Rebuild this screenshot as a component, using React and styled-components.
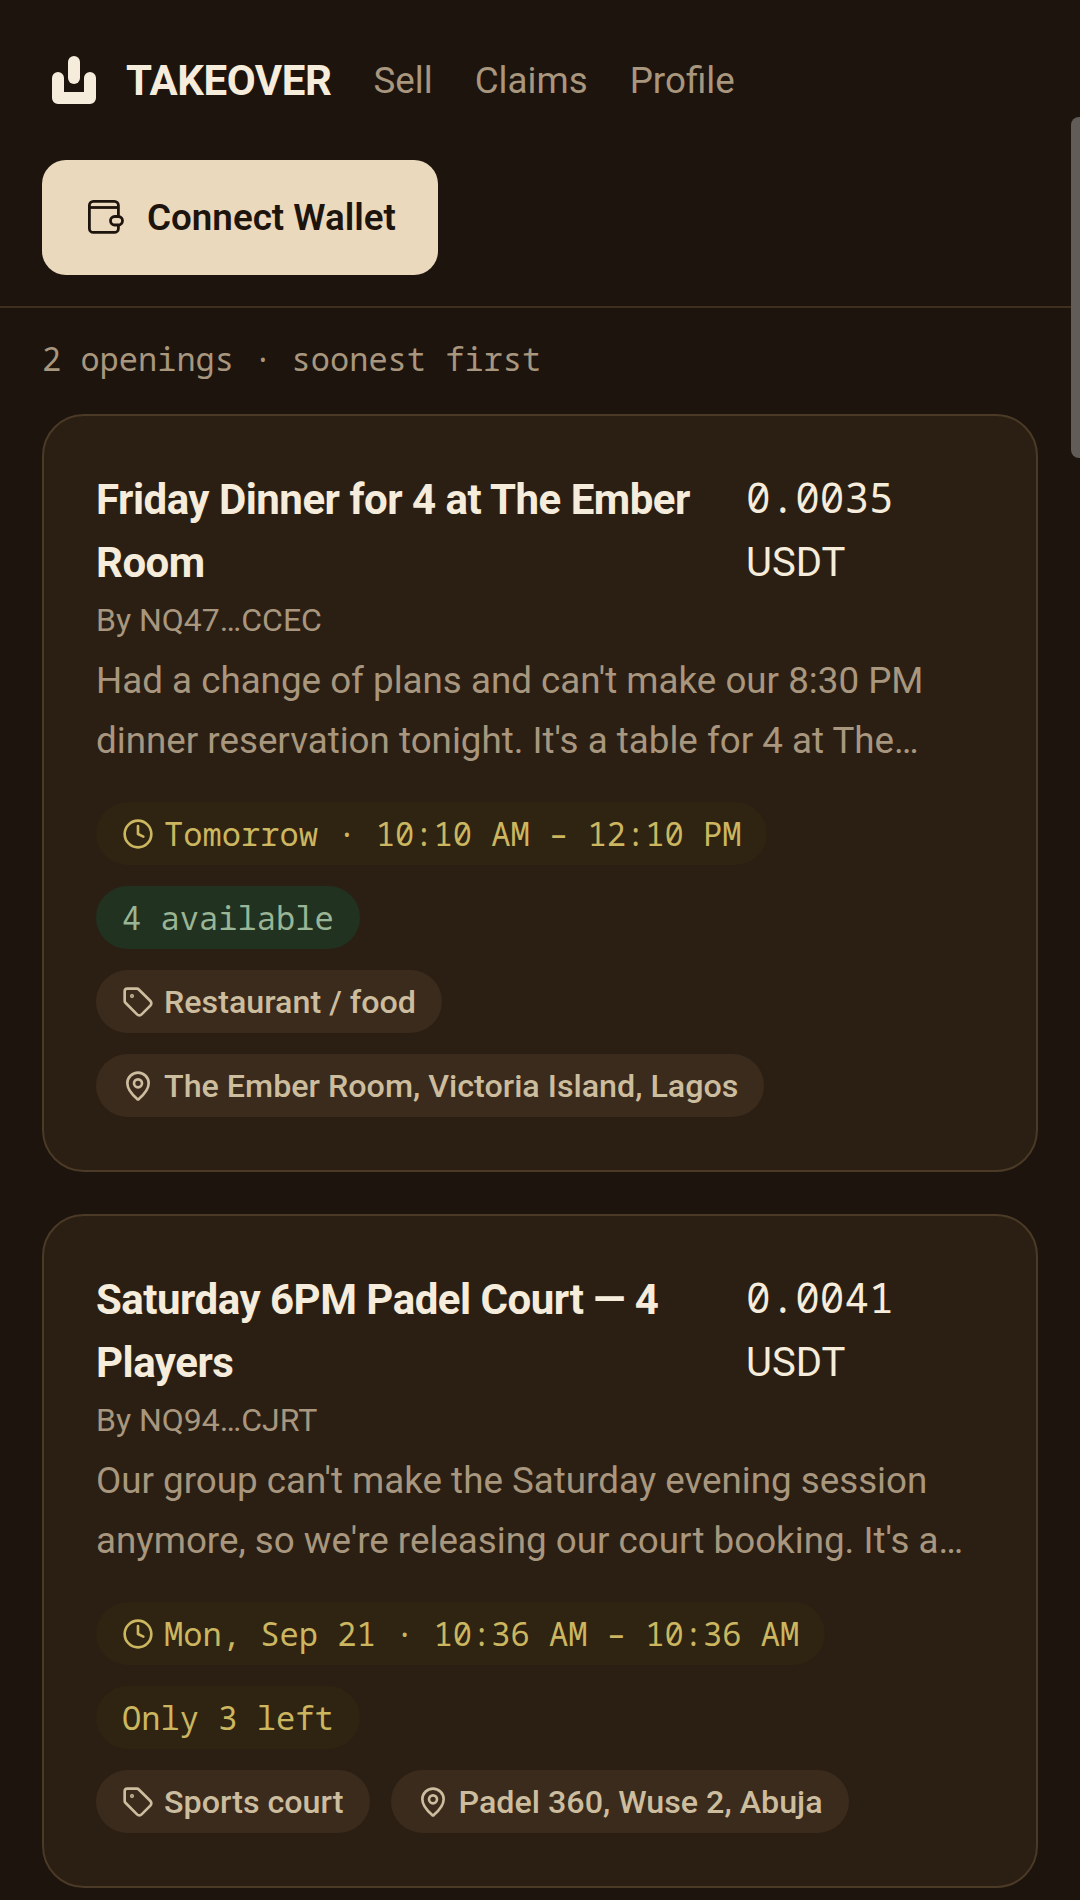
import React from "react";
import styled, { createGlobalStyle } from "styled-components";
import { Clock, Tag, MapPin } from "lucide-react";

const Global = createGlobalStyle`
  html, body { margin: 0; padding: 0; background: #1d140d; }
  * { box-sizing: border-box; }
`;
const MONO = '"Noto Sans Mono", "DejaVu Sans Mono", monospace';
const Page = styled.div`
  position: relative;
  width: 1080px;
  height: 1900px;
  overflow: hidden;
  background: #1d140d;
  font-family: Roboto, "Liberation Sans", sans-serif;
`;
const Header = styled.header`
  display: flex;
  flex-direction: column;
  align-items: flex-start;
  gap: 40px;
  padding: 40px 42px 31px;
  border-bottom: 2px solid #3d2f1e;
`;
const TopRow = styled.div`
  display: flex;
  align-items: center;
  height: 80px;
`;
const Brand = styled.div`
  display: flex;
  align-items: center;
  gap: 30px;
  padding-left: 10px;
  font-size: 42px;
  font-weight: 700;
  color: #f5ecdc;
  letter-spacing: -0.42px;
`;
const Nav = styled.nav`
  display: flex;
  gap: 42px;
  margin-left: 42px;
  font-size: 36.75px;
  color: #a8977e;
`;
const ConnectButton = styled.button`
  display: flex;
  align-items: center;
  gap: 23px;
  width: 396px;
  height: 115px;
  padding: 0 0 0 46px;
  border: 0;
  border-radius: 24px;
  background: #ead9bd;
  color: #1d140d;
  font-family: Roboto, sans-serif;
  font-size: 36.75px;
  font-weight: 600;
`;
const Main = styled.main`
  padding: 0 42px;
`;
const Summary = styled.div`
  height: 106px;
  padding-top: 31px;
  font-family: ${MONO};
  font-size: 32px;
  line-height: 40px;
  color: #a8977e;
`;
const Card = styled.article`
  padding: 52px 52px 53px;
  margin-bottom: 42px;
  border: 2px solid #4a3a26;
  border-radius: 42px;
  background: #2b1f14;
`;
const CardHead = styled.div`
  display: flex;
  justify-content: space-between;
`;
const Title = styled.h2`
  width: 630px;
  margin: 0;
  font-size: 42px;
  line-height: 63px;
  font-weight: 700;
  letter-spacing: -0.5px;
  color: #f5ecdc;
`;
const Price = styled.div`
  width: 238px;
  font-size: 40px;
  line-height: 63px;
  color: #f5ecdc;
`;
const PriceAmount = styled.span`
  display: block;
  height: 63px;
  font-family: ${MONO};
  font-size: 41px;
  line-height: 58px;
`;
const PriceUnit = styled.span`
  display: block;
`;
const Seller = styled.div`
  font-size: 32px;
  line-height: 53px;
  color: #a8977e;
`;
const Desc = styled.p`
  margin: 4px 0 0;
  font-size: 36.75px;
  line-height: 60px;
  color: #a8977e;
`;
const DescLine = styled.span`
  display: block;
  white-space: nowrap;
`;
const Pills = styled.div`
  display: flex;
  flex-direction: column;
  align-items: flex-start;
  gap: 21px;
  margin-top: 31px;
`;
const TagRow = styled.div`
  display: flex;
  flex-wrap: wrap;
  gap: 21px;
`;
const toneBg = { time: "#2e2411", green: "#213220", warn: "#2e2411", tag: "#3b2b1c" };
const toneFg = { time: "#ccb660", green: "#9ab596", warn: "#ccb660", tag: "#cdbd9f" };
const Pill = styled.span`
  display: inline-flex;
  align-items: center;
  gap: 10px;
  height: 63px;
  padding: 0 26px;
  border-radius: 32px;
  white-space: nowrap;
  background: ${(p) => toneBg[p.$tone]};
  color: ${(p) => toneFg[p.$tone]};
  font-family: ${(p) => (p.$tone === "tag" ? "Roboto, sans-serif" : MONO)};
  font-size: ${(p) => (p.$tone === "tag" ? "32.25px" : "32.1px")};
  font-weight: ${(p) => (p.$tone === "tag" ? 500 : 400)};
`;
const Scrollbar = styled.div`
  position: absolute;
  top: 117px;
  right: 0;
  width: 9px;
  height: 341px;
  border-radius: 8px 0 0 8px;
  background: #625c58;
`;
const Logo = () => (
  <svg width="44" height="48" viewBox="0 0 44 48" fill="#f5ecdc">
    <rect x="16" y="0" width="12" height="28" rx="6" />
    <path d="M0 22a6 6 0 0 1 12 0V36H32V22a6 6 0 0 1 12 0V42a6 6 0 0 1-6 6H6a6 6 0 0 1-6-6Z" />
  </svg>
);
const WalletIcon = () => (
  <svg width="36" height="35" viewBox="0 0 36 35" fill="none" stroke="#1d140d" strokeWidth="2.8">
    <rect x="1.4" y="1.4" width="29" height="31" rx="4" />
    <path d="M1.4 7.5H30.4" />
    <rect x="22.5" y="16.5" width="12" height="8.5" rx="4.2" fill="#ead9bd" />
  </svg>
);
const pillIcon = { size: 32, strokeWidth: 2 };
const listings = [
  {
    title: "Friday Dinner for 4 at The Ember Room",
    price: "0.0035",
    by: "By NQ47…CCEC",
    desc: ["Had a change of plans and can't make our 8:30 PM", "dinner reservation tonight. It's a table for 4 at The…"],
    time: "Tomorrow · 10:10 AM – 12:10 PM",
    stock: "4 available",
    stockTone: "green",
    cat: "Restaurant / food",
    place: "The Ember Room, Victoria Island, Lagos",
  },
  {
    title: "Saturday 6PM Padel Court — 4 Players",
    price: "0.0041",
    by: "By NQ94…CJRT",
    desc: ["Our group can't make the Saturday evening session", "anymore, so we're releasing our court booking. It's a…"],
    time: "Mon, Sep 21 · 10:36 AM – 10:36 AM",
    stock: "Only 3 left",
    stockTone: "warn",
    cat: "Sports court",
    place: "Padel 360, Wuse 2, Abuja",
  },
];
export default function App() {
  return (
    <Page>
      <Global />
      <Header>
        <TopRow>
          <Brand>
            <Logo />
            TAKEOVER
          </Brand>
          <Nav>
            <span>Sell</span>
            <span>Claims</span>
            <span>Profile</span>
          </Nav>
        </TopRow>
        <ConnectButton>
          <WalletIcon />
          Connect Wallet
        </ConnectButton>
      </Header>
      <Main>
        <Summary>2 openings · soonest first</Summary>
        {listings.map((l) => (
          <Card key={l.title}>
            <CardHead>
              <Title>{l.title}</Title>
              <Price>
                <PriceAmount>{l.price}</PriceAmount>
                <PriceUnit>USDT</PriceUnit>
              </Price>
            </CardHead>
            <Seller>{l.by}</Seller>
            <Desc>
              {l.desc.map((d) => (
                <DescLine key={d}>{d}</DescLine>
              ))}
            </Desc>
            <Pills>
              <Pill $tone="time">
                <Clock {...pillIcon} />
                {l.time}
              </Pill>
              <Pill $tone={l.stockTone}>{l.stock}</Pill>
              <TagRow>
                <Pill $tone="tag">
                  <Tag {...pillIcon} />
                  {l.cat}
                </Pill>
                <Pill $tone="tag">
                  <MapPin {...pillIcon} />
                  {l.place}
                </Pill>
              </TagRow>
            </Pills>
          </Card>
        ))}
      </Main>
      <Scrollbar />
    </Page>
  );
}
